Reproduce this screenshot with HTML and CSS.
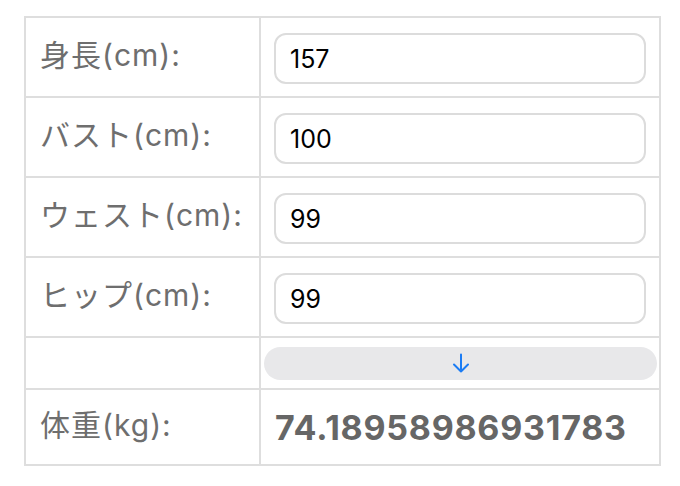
FILE: index.html
```html
<!DOCTYPE html>
<html lang="ja">
<head>
<meta charset="utf-8">
<link rel="stylesheet" href="styles.css">
</head>
<body>
<div class="sheet">
  <div class="cell label">身長(cm):</div>
  <div class="cell field"><input class="box" type="text" value="157"></div>
  <div class="cell label">バスト(cm):</div>
  <div class="cell field"><input class="box" type="text" value="100"></div>
  <div class="cell label">ウェスト(cm):</div>
  <div class="cell field"><input class="box" type="text" value="99"></div>
  <div class="cell label">ヒップ(cm):</div>
  <div class="cell field"><input class="box" type="text" value="99"></div>
  <div class="cell blank"></div>
  <div class="cell action">
    <button class="calc" type="button" aria-label="計算">
      <svg width="18" height="20" viewBox="0 0 18 20" fill="none" stroke="#1b7cf4" stroke-width="2" stroke-linecap="round" stroke-linejoin="round"><path d="M9 1.5V18.5M2 11.5L9 18.5L16 11.5"/></svg>
    </button>
  </div>
  <div class="cell label">体重(kg):</div>
  <div class="cell result">74.18958986931783</div>
</div>
</body>
</html>
```

FILE: styles.css
```css
html, body {
  margin: 0;
  padding: 0;
  background: #ffffff;
}
body {
  padding: 16px 0 0 24px;
  font-family: Inter, "Noto Sans CJK JP", sans-serif;
}
.sheet {
  display: grid;
  grid-template-columns: 233px 398px;
  grid-template-rows: 78px 78px 78px 78px 50px 74px;
  gap: 2px;
  padding: 2px;
  background: #dedede;
  width: max-content;
}
.cell {
  background: #ffffff;
  display: flex;
  align-items: center;
  padding: 0 14px;
  box-sizing: border-box;
}
.label {
  color: #6e6e6e;
  font-size: 30px;
  font-weight: 400;
  line-height: 1.2;
  letter-spacing: 1px;
  padding-bottom: 5px;
  white-space: nowrap;
}
.field {
  padding: 3px 13px 0 13px;
}
.box {
  box-sizing: border-box;
  width: 100%;
  height: 51px;
  margin: 0;
  border: 2px solid #dcdcdc;
  border-radius: 12px;
  padding: 0 14px;
  font-family: Inter, sans-serif;
  font-size: 25px;
  color: #000000;
  background: #ffffff;
  outline: none;
}
.action {
  padding: 0 2px 0 3px;
}
.calc {
  width: 100%;
  height: 33px;
  margin: 0;
  border: none;
  border-radius: 17px;
  background: #e8e8ea;
  display: flex;
  align-items: center;
  justify-content: center;
  padding: 0;
}
.result {
  color: #666666;
  font-size: 34px;
  font-weight: 700;
  letter-spacing: 0.75px;
}
```
